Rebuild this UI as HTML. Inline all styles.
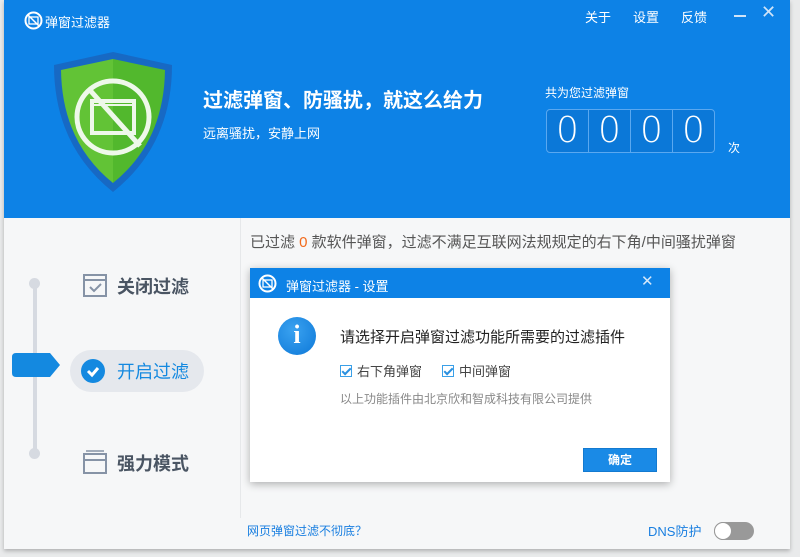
<!DOCTYPE html>
<html><head><meta charset="utf-8"><style>
*{margin:0;padding:0;box-sizing:border-box}
body{width:800px;height:557px;overflow:hidden;background:#e9eaeb;font-family:"Liberation Sans","Noto Sans CJK SC",sans-serif;position:relative}
.win{position:absolute;left:4px;top:0;width:786px;height:549px;background:#f6f7f8;box-shadow:0 2px 4px rgba(0,0,0,.25)}
.top{position:absolute;left:0;top:0;width:786px;height:218px;background:#0d82e6;color:#fff}
.abs{position:absolute}
.digits{position:absolute;left:542px;top:109px;width:169px;height:44px;border:1px solid #5aa8f0;border-radius:4px;background:#0b78d8;display:flex}
.digits div{flex:1;border-right:1px solid #5aa8f0;text-align:center;font-size:36px;line-height:42px;font-family:"DejaVu Sans ExtraLight","DejaVu Sans",sans-serif;font-weight:200}
.digits div:last-child{border-right:none}
.menu{font-size:18px;color:#4a5563;font-weight:bold}
.dlg{position:absolute;left:250px;top:268px;width:420px;height:214px;background:#fff;box-shadow:0 2px 8px rgba(0,0,0,.3)}
.cb{display:inline-block;width:12px;height:12px;border:1px solid #3aa0e8;vertical-align:-1px;margin-right:5px;position:relative}
.cb:after{content:"";position:absolute;left:3px;top:0px;width:3px;height:7px;border:solid #2a90e0;border-width:0 2px 2px 0;transform:rotate(45deg)}
</style></head><body>
<div class="win">
<div class="top">
  <svg class="abs" style="left:20px;top:11px" width="19" height="19" viewBox="0 0 19 19"><circle cx="9.5" cy="9.5" r="8" fill="none" stroke="#fff" stroke-width="2"/><rect x="5" y="6" width="9" height="7" fill="none" stroke="#fff" stroke-width="1.3"/><line x1="4" y1="4" x2="15" y2="15" stroke="#fff" stroke-width="1.5"/></svg>
  <div class="abs" style="left:41px;top:12px;font-size:13px">弹窗过滤器</div>
  <div class="abs" style="left:581px;top:7px;font-size:13px">关于</div>
  <div class="abs" style="left:629px;top:7px;font-size:13px">设置</div>
  <div class="abs" style="left:677px;top:7px;font-size:13px">反馈</div>
  <div class="abs" style="left:730px;top:15px;width:12px;height:2px;background:#cfe4f8"></div>
  <div class="abs" style="left:757px;top:2px;font-size:18px;color:#cfe4f8">✕</div>
  <svg class="abs" style="left:46px;top:50px" width="126" height="145" viewBox="0 0 126 145">
    <path d="M63 2 L4 15 Q4 95 63 142 Q122 95 122 15 Z" fill="#1769c4"/>
    <path d="M63 9 L11 20 Q12 92 63 133 Z" fill="#62c336"/>
    <path d="M63 9 L115 20 Q114 92 63 133 Z" fill="#52b82d"/>
    <circle cx="63" cy="67" r="36" fill="none" stroke="#eef8ea" stroke-width="5"/>
    <rect x="42" y="51" width="42" height="32" fill="none" stroke="#eef8ea" stroke-width="4"/>
    <line x1="42" y1="55" x2="84" y2="55" stroke="#eef8ea" stroke-width="2"/>
    <line x1="38" y1="38" x2="90" y2="96" stroke="#eef8ea" stroke-width="5"/>
  </svg>
  <div class="abs" style="left:199px;top:84px;font-size:20px;font-weight:bold">过滤弹窗、防骚扰，就这么给力</div>
  <div class="abs" style="left:199px;top:123px;font-size:13px">远离骚扰，安静上网</div>
  <div class="abs" style="left:541px;top:84px;font-size:12px">共为您过滤弹窗</div>
  <div class="digits"><div>0</div><div>0</div><div>0</div><div>0</div></div>
  <div class="abs" style="left:724px;top:139px;font-size:12px">次</div>
</div>
<div class="abs" style="left:236px;top:218px;width:1px;height:300px;background:#e6e8ea"></div>
<div class="abs" style="left:29px;top:282px;width:4px;height:172px;background:#d6dae1"></div>
<div class="abs" style="left:25px;top:278px;width:11px;height:11px;border-radius:50%;background:#d6dae1"></div>
<div class="abs" style="left:25px;top:448px;width:11px;height:11px;border-radius:50%;background:#d6dae1"></div>
<svg class="abs" style="left:8px;top:353px" width="50" height="26"><path d="M4 0 H38 L48 12 L38 24 H4 Q0 24 0 20 V4 Q0 0 4 0Z" fill="#1489e0"/></svg>
<svg class="abs" style="left:79px;top:274px" width="24" height="23"><rect x="1" y="1" width="22" height="21" fill="none" stroke="#8693a6" stroke-width="2"/><line x1="1" y1="6" x2="23" y2="6" stroke="#8693a6" stroke-width="2"/><path d="M7 13 L11 17 L18 10" fill="none" stroke="#8693a6" stroke-width="2"/></svg>
<div class="abs menu" style="left:113px;top:273px">关闭过滤</div>
<div class="abs" style="left:66px;top:350px;width:134px;height:42px;border-radius:21px;background:#e5e8ed"></div>
<div class="abs" style="left:77px;top:359px;width:24px;height:24px;border-radius:50%;background:#1489e0"></div>
<svg class="abs" style="left:77px;top:359px" width="24" height="24"><path d="M7 12 L11 16 L17 9" fill="none" stroke="#fff" stroke-width="3"/></svg>
<div class="abs menu" style="left:113px;top:358px;color:#1489e0;font-weight:normal">开启过滤</div>
<svg class="abs" style="left:79px;top:450px" width="24" height="24"><rect x="1" y="4" width="22" height="19" fill="none" stroke="#8693a6" stroke-width="2"/><line x1="1" y1="10" x2="23" y2="10" stroke="#8693a6" stroke-width="2"/><line x1="3" y1="1" x2="21" y2="1" stroke="#8693a6" stroke-width="1.5"/></svg>
<div class="abs menu" style="left:113px;top:450px">强力模式</div>
<div class="abs" style="left:246px;top:231px;font-size:15px;color:#555">已过滤 <span style="color:#f26a1b">0</span> 款软件弹窗，过滤不满足互联网法规规定的右下角/中间骚扰弹窗</div>
<div class="abs" style="left:243px;top:522px;font-size:12px;color:#1a7fe0">网页弹窗过滤不彻底？</div>
<div class="abs" style="left:644px;top:521px;font-size:13px;color:#1a7fe0">DNS防护</div>
<div class="abs" style="left:710px;top:522px;width:40px;height:18px;border-radius:9px;background:#999"></div>
<div class="abs" style="left:710px;top:522px;width:18px;height:18px;border-radius:50%;background:#fff;border:1px solid #999"></div>
</div>
<div class="dlg">
  <div style="height:30px;background:#0d82e6;color:#fff;position:relative">
    <svg class="abs" style="left:8px;top:6px" width="19" height="19"><circle cx="9.5" cy="9.5" r="8" fill="none" stroke="#fff" stroke-width="2"/><rect x="5" y="6" width="9" height="7" fill="none" stroke="#fff" stroke-width="1.3"/><line x1="4" y1="4" x2="15" y2="15" stroke="#fff" stroke-width="1.5"/></svg>
    <div class="abs" style="left:36px;top:8px;font-size:13px">弹窗过滤器 - 设置</div>
    <div class="abs" style="left:391px;top:4px;font-size:15px;color:#d5e8fa">✕</div>
  </div>
  <div class="abs" style="left:28px;top:49px;width:38px;height:38px;border-radius:50%;background:radial-gradient(circle at 40% 35%,#3aa2f0,#0d78d8)"></div>
  <div class="abs" style="left:28px;top:52px;width:38px;text-align:center;color:#fff;font:bold 26px 'Liberation Serif',serif">i</div>
  <div class="abs" style="left:90px;top:58px;font-size:15px;color:#222">请选择开启弹窗过滤功能所需要的过滤插件</div>
  <div class="abs" style="left:90px;top:93px;font-size:13px;color:#444"><span class="cb"></span>右下角弹窗</div>
  <div class="abs" style="left:192px;top:93px;font-size:13px;color:#444"><span class="cb"></span>中间弹窗</div>
  <div class="abs" style="left:90px;top:122px;font-size:12px;color:#888">以上功能插件由北京欣和智成科技有限公司提供</div>
  <div class="abs" style="left:333px;top:180px;width:74px;height:24px;background:#1a8ae6;border:1px solid #137ad0;color:#fff;font-size:12px;text-align:center;line-height:22px;font-weight:bold">确定</div>
</div>
</body></html>
